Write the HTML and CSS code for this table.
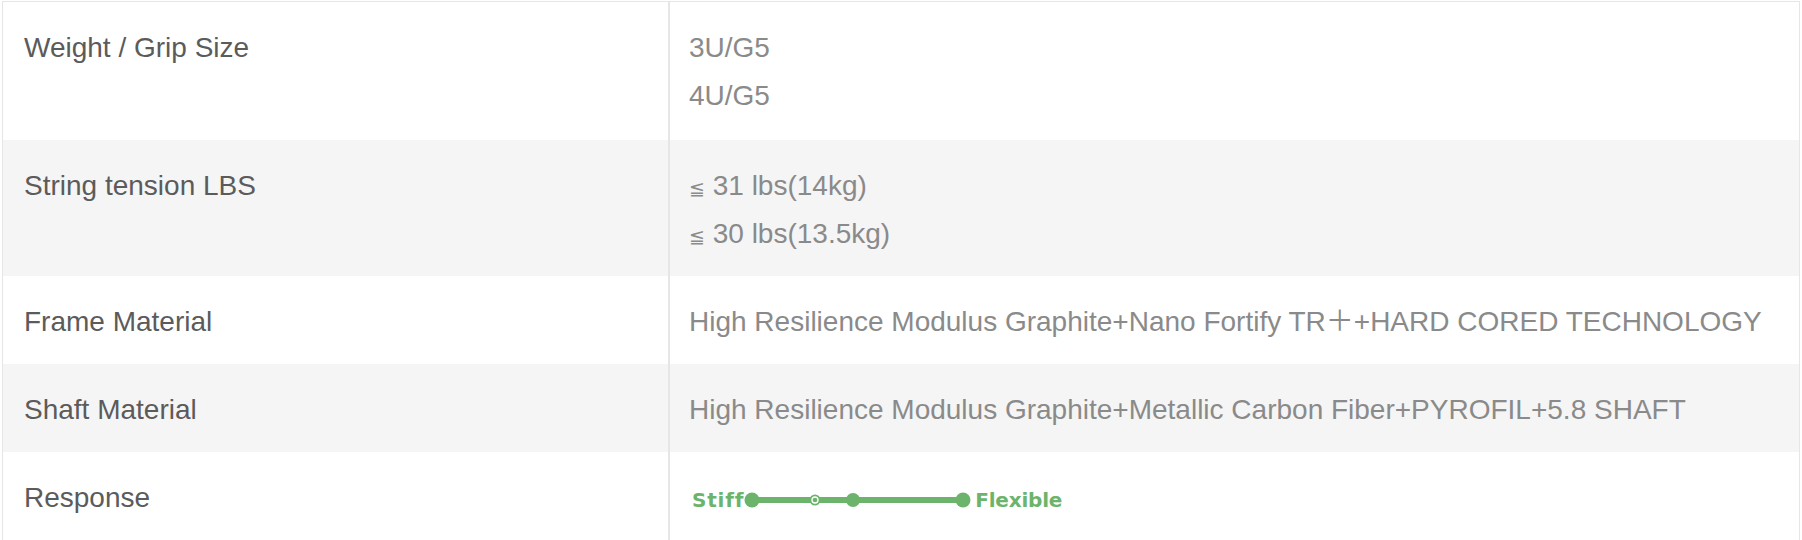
FILE: index.html
```html
<!DOCTYPE html>
<html lang="en">
<head>
<meta charset="utf-8">
<title>Specifications</title>
<link rel="stylesheet" href="styles.css">
</head>
<body>
<table class="specs">
  <tbody>
    <tr class="row first">
      <th class="label">Weight / Grip Size</th>
      <td class="value"><p class="line">3U/G5</p><p class="line">4U/G5</p></td>
    </tr>
    <tr class="row alt">
      <th class="label">String tension LBS</th>
      <td class="value"><p class="line"><span class="sym">≦</span> 31 lbs(14kg)</p><p class="line"><span class="sym">≦</span> 30 lbs(13.5kg)</p></td>
    </tr>
    <tr class="row">
      <th class="label">Frame Material</th>
      <td class="value"><p class="line">High Resilience Modulus Graphite+Nano Fortify TR<span class="wide">＋</span>+HARD CORED TECHNOLOGY</p></td>
    </tr>
    <tr class="row alt">
      <th class="label">Shaft Material</th>
      <td class="value"><p class="line">High Resilience Modulus Graphite+Metallic Carbon Fiber+PYROFIL+5.8 SHAFT</p></td>
    </tr>
    <tr class="row">
      <th class="label">Response</th>
      <td class="value">
        <div class="flex-scale">
          <span class="flex-word stiff">Stiff</span>
          <svg class="flex-bar" width="228" height="16" viewBox="0 0 228 16" aria-hidden="true">
            <line x1="8" y1="8" x2="220" y2="8" stroke="#6cb46b" stroke-width="6"/>
            <circle cx="8" cy="8" r="7.5" fill="#6cb46b"/>
            <circle cx="71" cy="8" r="5.5" fill="#6cb46b"/>
            <circle cx="71" cy="8" r="3" fill="none" stroke="#ffffff" stroke-width="1.3"/>
            <circle cx="71" cy="8" r="1.2" fill="#6cb46b"/>
            <circle cx="109" cy="8" r="7" fill="#6cb46b"/>
            <circle cx="219" cy="8" r="7.5" fill="#6cb46b"/>
          </svg>
          <span class="flex-word">Flexible</span>
        </div>
      </td>
    </tr>
  </tbody>
</table>
</body>
</html>
```

FILE: styles.css
```css
html, body {
  margin: 0;
  padding: 0;
  background: #ffffff;
}

body {
  padding: 1px 2px 0 2px;
  font-family: "Liberation Sans", Arial, "Noto Sans CJK SC", sans-serif;
  font-size: 28px;
  line-height: 48px;
}

.specs {
  width: 100%;
  border-collapse: collapse;
  border: 1px solid #e6e6e6;
}

.row {
  background: #ffffff;
}

.row.alt {
  background: #f5f5f5;
}

.label {
  width: 624px;
  padding: 22px 20px 18px 21px;
  text-align: left;
  vertical-align: top;
  font-weight: normal;
  color: #5b5b5b;
  border-right: 2px solid #e6e6e6;
}

.value {
  padding: 22px 18px 18px 19px;
  vertical-align: top;
  color: #8a8a8a;
}

.row.first .label,
.row.first .value {
  padding-bottom: 20px;
}

.line {
  margin: 0;
}

.sym {
  font-family: "DejaVu Sans", sans-serif;
  font-size: 19px;
  line-height: 1;
}

.wide {
  line-height: 1;
}

.flex-scale {
  display: flex;
  align-items: center;
  height: 48px;
  padding: 3px 0 0 3px;
  box-sizing: border-box;
}

.flex-word {
  font-family: "DejaVu Sans", sans-serif;
  font-weight: bold;
  font-size: 20px;
  letter-spacing: -0.2px;
  color: #6cb46b;
  line-height: 1;
}

.flex-word.stiff {
  letter-spacing: 0.8px;
}

.flex-bar {
  display: block;
  margin: 0 3px 0 0;
}
```
